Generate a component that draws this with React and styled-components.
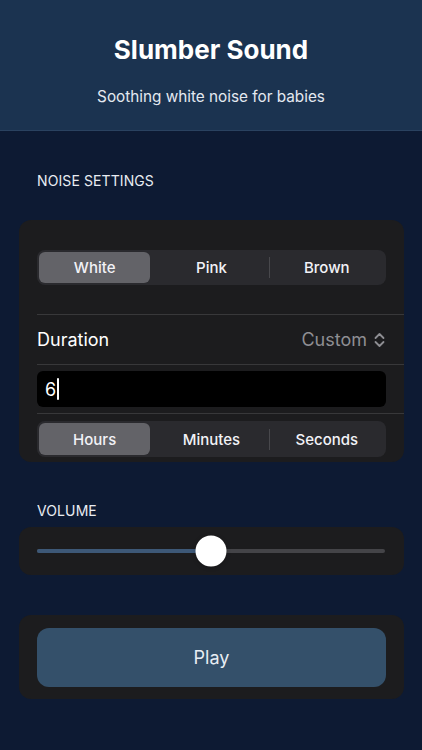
import React from "react";
import styled, { createGlobalStyle } from "styled-components";

const Global = createGlobalStyle`
  html, body { margin: 0; padding: 0; background: #0d1a33; }
  body { font-family: Inter, "Noto Sans", "Liberation Sans", sans-serif; -webkit-font-smoothing: antialiased; }
  * { box-sizing: border-box; }
`;

const Page = styled.div`
  width: 422px;
  min-height: 750px;
  background: #0d1a33;
  color: #fff;
`;

const Header = styled.header`
  background: #1b3350;
  border-bottom: 1px solid #2a4260;
  padding: 35px 0 23px;
  text-align: center;
`;

const Title = styled.h1`
  margin: 0;
  font-size: 26px;
  line-height: 30px;
  font-weight: 700;
  color: #fff;
`;

const Subtitle = styled.p`
  margin: 22px 0 0;
  font-size: 15.3px;
  line-height: 20px;
  color: #e4e9f0;
`;

const Main = styled.main`
  padding: 41px 18px 0 19px;
  display: flex;
  flex-direction: column;
`;

const SectionLabel = styled.div`
  padding-left: 18px;
  font-size: 14px;
  line-height: 18px;
  letter-spacing: 0.1px;
  color: #e8ecf2;
  margin-top: ${(p) => p.$top || 0}px;
  margin-bottom: ${(p) => p.$bottom || 0}px;
`;

const Card = styled.section`
  background: #1c1c1e;
  border-radius: 12px;
  padding-left: 18px;
  margin-top: ${(p) => p.$top || 0}px;
`;

const Row = styled.div`
  display: flex;
  align-items: center;
  justify-content: space-between;
  padding: ${(p) => p.$pad || "0"};
  padding-right: 18px;
  height: ${(p) => (p.$h ? p.$h + "px" : "auto")};
  border-top: ${(p) => (p.$sep ? "1px solid #38383a" : "none")};
`;

const Segmented = styled.div`
  flex: 1;
  display: flex;
  align-items: center;
  height: ${(p) => p.$h}px;
  background: #2a2a2e;
  border-radius: 8px;
  padding: 2px;
`;

const Segment = styled.div`
  flex: 1;
  height: 100%;
  display: flex;
  align-items: center;
  justify-content: center;
  position: relative;
  font-size: 15px;
  font-weight: 500;
  color: #f2f2f7;

  &::before {
    content: "";
    position: absolute;
    top: 0;
    bottom: 0;
    left: 0;
    right: 3px;
    border-radius: 6px;
    background: ${(p) => (p.$active ? "#636368" : "transparent")};
  }
`;

const SegmentText = styled.span`
  position: relative;
  margin-right: ${(p) => (p.$active ? 3 : 0)}px;
`;

const Divider = styled.span`
  width: 1px;
  height: 21px;
  background: #48484c;
  flex: none;
  opacity: ${(p) => (p.$show ? 1 : 0)};
`;

const RowLabel = styled.span`
  font-size: 18px;
  color: #fff;
`;

const Picker = styled.span`
  display: flex;
  align-items: center;
  gap: 7px;
  margin-right: 1px;
  font-size: 18px;
  color: #8e8e93;
`;

const Field = styled.div`
  flex: 1;
  height: 36px;
  background: #000;
  border-radius: 6px;
  display: flex;
  align-items: center;
  padding-left: 8px;
  font-size: 18px;
  color: #fff;
`;

const Caret = styled.span`
  display: inline-block;
  width: 2px;
  height: 22px;
  margin-left: 1px;
  background: #fff;
  border-radius: 1px;
`;

const SliderCard = styled.section`
  background: #1c1c1e;
  border-radius: 12px;
  height: 48px;
  padding: 0 19px 0 18px;
  display: flex;
  align-items: center;
`;

const Track = styled.div`
  position: relative;
  flex: 1;
  height: 4px;
  border-radius: 2px;
  background: #444448;
`;

const Fill = styled.div`
  height: 100%;
  border-radius: 2px;
  background: #3d5877;
`;

const Thumb = styled.div`
  position: absolute;
  top: 50%;
  width: 31px;
  height: 31px;
  border-radius: 50%;
  background: #fff;
  transform: translate(-50%, -50%);
  box-shadow: 0 1px 4px rgba(0, 0, 0, 0.25);
`;

const PlayCard = styled.section`
  background: #1c1c1e;
  border-radius: 12px;
  padding: 13px 18px 12px;
  margin-top: 40px;
`;

const PlayButton = styled.button`
  width: 100%;
  height: 59px;
  border: none;
  border-radius: 12px;
  background: #34506a;
  color: #e8edf3;
  font-family: inherit;
  font-size: 18px;
  font-weight: 400;
`;

function UpDown() {
  return (
    <svg width="11" height="16" viewBox="0 0 11 16" fill="none" stroke="#8e8e93" strokeWidth="1.8" strokeLinecap="round" strokeLinejoin="round">
      <path d="M1.5 6 L5.5 2 L9.5 6" />
      <path d="M1.5 10 L5.5 14 L9.5 10" />
    </svg>
  );
}

function SegmentedControl({ items, active, height }) {
  const parts = [];
  items.forEach((it, i) => {
    if (i > 0) {
      const show = i !== active && i - 1 !== active;
      parts.push(<Divider key={"d" + i} $show={show} />);
    }
    parts.push(
      <Segment key={it} $active={i === active}>
        <SegmentText $active={i === active}>{it}</SegmentText>
      </Segment>
    );
  });
  return <Segmented $h={height}>{parts}</Segmented>;
}

export default function App() {
  const volume = 0.5;
  return (
    <Page>
      <Global />
      <Header>
        <Title>Slumber Sound</Title>
        <Subtitle>Soothing white noise for babies</Subtitle>
      </Header>
      <Main>
        <SectionLabel>NOISE SETTINGS</SectionLabel>
        <Card $top={30}>
          <Row $pad="30px 0 29px">
            <SegmentedControl items={["White", "Pink", "Brown"]} active={0} height={35} />
          </Row>
          <Row $sep $h={50}>
            <RowLabel>Duration</RowLabel>
            <Picker>
              Custom
              <UpDown />
            </Picker>
          </Row>
          <Row $sep $pad="6px 0 6px">
            <Field>
              6<Caret />
            </Field>
          </Row>
          <Row $sep $pad="7px 0 5px">
            <SegmentedControl items={["Hours", "Minutes", "Seconds"]} active={0} height={36} />
          </Row>
        </Card>
        <SectionLabel $top={40} $bottom={7}>VOLUME</SectionLabel>
        <SliderCard>
          <Track>
            <Fill style={{ width: `${volume * 100}%` }} />
            <Thumb style={{ left: `${volume * 100}%` }} />
          </Track>
        </SliderCard>
        <PlayCard>
          <PlayButton>Play</PlayButton>
        </PlayCard>
      </Main>
    </Page>
  );
}
